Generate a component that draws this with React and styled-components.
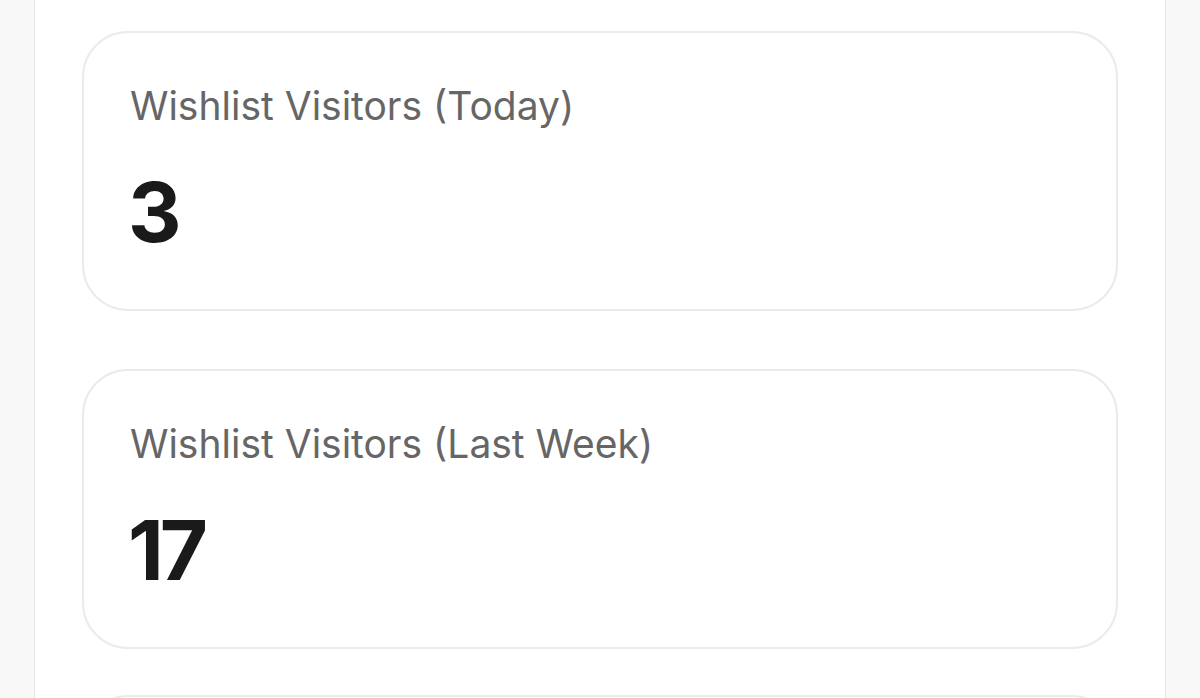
import React from 'react';
import styled, { createGlobalStyle } from 'styled-components';

const GlobalStyle = createGlobalStyle`
  html, body {
    margin: 0;
    height: 100%;
    background: #f8f8f8;
  }
  #root {
    height: 100%;
  }
`;

const Page = styled.div`
  height: 100%;
  display: flex;
  justify-content: flex-start;
  padding-left: 34px;
  overflow: hidden;
`;

const Panel = styled.main`
  width: 1132px;
  height: 100%;
  box-sizing: border-box;
  background: #ffffff;
  border-left: 1px solid #e6e6e6;
  border-right: 1px solid #e6e6e6;
  padding: 31px 47px 0 47px;
  display: flex;
  flex-direction: column;
  gap: 46px;
`;

const Card = styled.section`
  box-sizing: border-box;
  height: 280px;
  flex-shrink: 0;
  border: 2px solid #ebebeb;
  border-radius: 46px;
  background: #ffffff;
  padding: 49px 46px 0 46px;
  display: flex;
  flex-direction: column;
  gap: 42px;

  &:first-child {
    margin-bottom: 12px;
  }
`;

const Label = styled.div`
  font-family: Inter, "Noto Sans", sans-serif;
  font-size: 39px;
  line-height: 47px;
  font-weight: 400;
  color: #666666;
`;

const Value = styled.div`
  font-family: Inter, "Noto Sans", sans-serif;
  font-size: 83px;
  line-height: 82px;
  font-weight: 700;
  letter-spacing: -4px;
  margin-left: -2px;
  color: #1a1a1a;
`;

const stats = [
  { label: 'Wishlist Visitors (Today)', value: '3' },
  { label: 'Wishlist Visitors (Last Week)', value: '17' },
  { label: 'Wishlist Visitors (Last Month)', value: '52' },
];

export default function App() {
  return (
    <>
      <GlobalStyle />
      <Page>
        <Panel>
          {stats.map((s) => (
            <Card key={s.label}>
              <Label>{s.label}</Label>
              <Value>{s.value}</Value>
            </Card>
          ))}
        </Panel>
      </Page>
    </>
  );
}
